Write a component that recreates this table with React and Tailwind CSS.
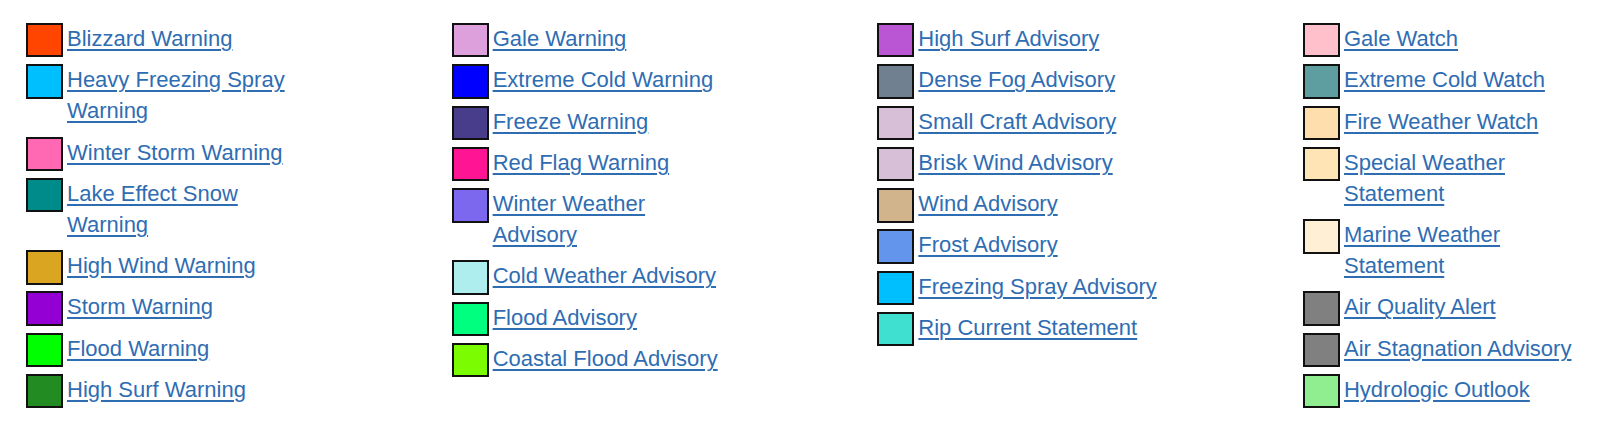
const COLUMNS = [
  [
    { label: 'Blizzard Warning', color: '#FF4500' },
    { label: 'Heavy Freezing Spray Warning', color: '#00BFFF' },
    { label: 'Winter Storm Warning', color: '#FF69B4' },
    { label: 'Lake Effect Snow Warning', color: '#008B8B' },
    { label: 'High Wind Warning', color: '#DAA520' },
    { label: 'Storm Warning', color: '#9400D3' },
    { label: 'Flood Warning', color: '#00FF00' },
    { label: 'High Surf Warning', color: '#228B22' },
  ],
  [
    { label: 'Gale Warning', color: '#DDA0DD' },
    { label: 'Extreme Cold Warning', color: '#0000FF' },
    { label: 'Freeze Warning', color: '#483D8B' },
    { label: 'Red Flag Warning', color: '#FF1493' },
    { label: 'Winter Weather Advisory', color: '#7B68EE' },
    { label: 'Cold Weather Advisory', color: '#AFEEEE' },
    { label: 'Flood Advisory', color: '#00FF7F' },
    { label: 'Coastal Flood Advisory', color: '#7CFC00' },
  ],
  [
    { label: 'High Surf Advisory', color: '#BA55D3' },
    { label: 'Dense Fog Advisory', color: '#708090' },
    { label: 'Small Craft Advisory', color: '#D8BFD8' },
    { label: 'Brisk Wind Advisory', color: '#D8BFD8' },
    { label: 'Wind Advisory', color: '#D2B48C' },
    { label: 'Frost Advisory', color: '#6495ED' },
    { label: 'Freezing Spray Advisory', color: '#00BFFF' },
    { label: 'Rip Current Statement', color: '#40E0D0' },
  ],
  [
    { label: 'Gale Watch', color: '#FFC0CB' },
    { label: 'Extreme Cold Watch', color: '#5F9EA0' },
    { label: 'Fire Weather Watch', color: '#FFDEAD' },
    { label: 'Special Weather Statement', color: '#FFE4B5' },
    { label: 'Marine Weather Statement', color: '#FFEFD5' },
    { label: 'Air Quality Alert', color: '#808080' },
    { label: 'Air Stagnation Advisory', color: '#808080' },
    { label: 'Hydrologic Outlook', color: '#90EE90' },
  ],
];

function LegendItem({ label, color }) {
  return (
    <div className="flex items-start gap-[4px]">
      {/* swatch colour comes from data */}
      <span
        className="block w-[37px] h-[34.4px] shrink-0 border-2 border-[#111]"
        style={{ backgroundColor: color }}
      />
      <a
        href="#"
        className="block w-[241.5px] pb-[10.3px] leading-[31px] text-[22px] text-[#2f6db3] underline decoration-[1.5px] underline-offset-[3px]"
      >
        {label}
      </a>
    </div>
  );
}

export default function App() {
  return (
    <div className="w-[1600px] h-[425px] overflow-hidden bg-white font-['Liberation_Sans',Arial,sans-serif]">
      <div className="grid grid-cols-[425.67px_425.67px_425.67px_1fr] pl-[26px] pt-[23px]">
        {COLUMNS.map((col, i) => (
          <div key={i} className="flex flex-col">
            {col.map((item) => (
              <LegendItem key={item.label} {...item} />
            ))}
          </div>
        ))}
      </div>
    </div>
  );
}
